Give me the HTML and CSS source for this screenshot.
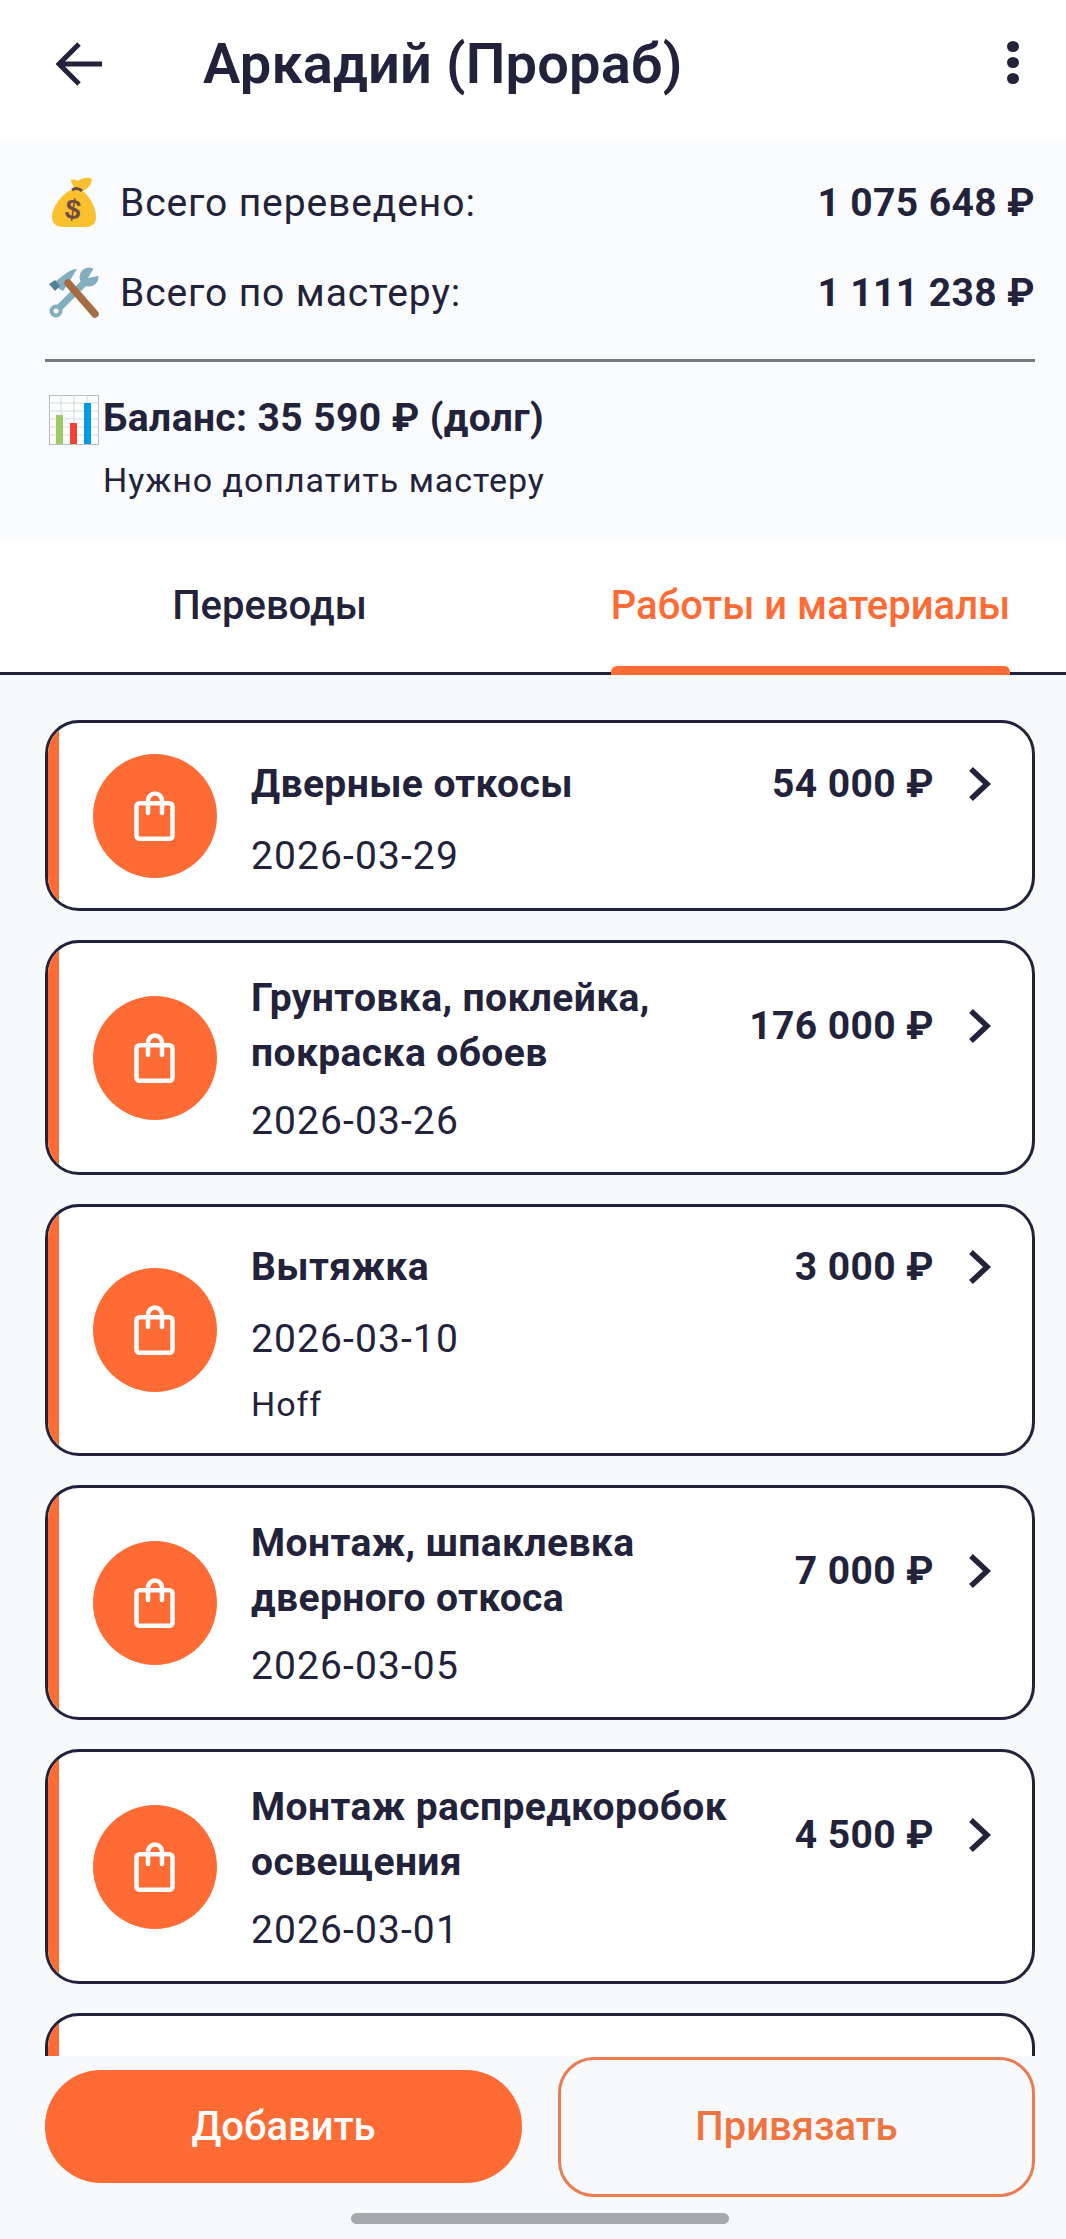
FILE: index.html
```html
<!DOCTYPE html>
<html lang="ru">
<head>
    <meta charset="UTF-8">
    <meta name="viewport" content="width=device-width, initial-scale=1.0">
    <title>Аркадий (Прораб)</title>
    <link rel="stylesheet" href="styles.css">
</head>
<body>
    <svg class="icon-defs" xmlns="http://www.w3.org/2000/svg">
        <symbol id="bag" viewBox="0 0 44 54">
            <rect x="3.500" y="14.200" width="36" height="35.600" rx="3" fill="none" stroke="#fff" stroke-width="4.500"/>
            <path d="M15 24V11.500a7 7 0 0 1 14 0V24" fill="none" stroke="#fff" stroke-width="4.500" stroke-linecap="round"/>
        </symbol>
        <symbol id="chevron" viewBox="0 0 24 36">
            <path d="M3 3l16 15L3 33" fill="none" stroke="#22223a" stroke-width="5.500"/>
        </symbol>
    </svg>

    <header class="topbar">
        <svg class="back-icon" viewBox="0 0 46 44">
            <path d="M46 22H4M23 2L3 22l20 20" fill="none" stroke="#22223a" stroke-width="5"/>
        </svg>
        <h1 class="topbar-title">Аркадий (Прораб)</h1>
        <div class="dots"><span></span><span></span><span></span></div>
    </header>

    <section class="summary">
        <div class="summary-row">
            <svg class="emoji" viewBox="0 0 50 52">
                <path d="M22 13C13 17 3 30 3 40c0 7 5 10 12 10h20c8 0 12-3 12-10 0-11-8-23-15-27z" fill="#fbc02d"/>
                <path d="M26 13c-1-4-4-7-4-10 3-1 5 0 7 1 2-2 8-4 13-3 2 3-1 9-5 11l-3 2z" fill="#fbc02d"/>
                <path d="M23 13c3-2 7-2 10 1" fill="none" stroke="#6d4c41" stroke-width="3"/>
                <text class="emoji-dollar" x="24" y="42" text-anchor="middle" transform="rotate(8 24 32)">$</text>
            </svg>
            <span class="summary-label">Всего переведено:</span>
            <span class="summary-value">1 075 648 ₽</span>
        </div>
        <div class="summary-row summary-row-second">
            <svg class="emoji" viewBox="0 0 50 52">
                <path d="M6 45L36 15" stroke="#82aec0" stroke-width="7"/>
                <circle cx="7" cy="44" r="6.500" fill="#82aec0"/>
                <circle cx="7" cy="44" r="2.500" fill="#fafbfd"/>
                <circle cx="40" cy="10" r="9.500" fill="#82aec0"/>
                <path d="M39 11l7-12 8 9z" fill="#fafbfd"/>
                <path d="M7 14l9-7c4-3 8-5 12-5-2 3-4 6-6 10l-8 12-5-3z" fill="#82aec0"/>
                <path d="M0 17l6-4 5 6-5 5z" fill="#4f8296"/>
                <path d="M19 16l27 31" stroke="#a56c43" stroke-width="7.500" stroke-linecap="round"/>
            </svg>
            <span class="summary-label">Всего по мастеру:</span>
            <span class="summary-value">1 111 238 ₽</span>
        </div>
        <hr class="summary-line">
        <div class="balance">
            <svg class="emoji emoji-chart" viewBox="0 0 50 50">
                <rect x="0.500" y="0.500" width="49" height="49" fill="#fff" stroke="#b0bec5"/>
                <path d="M0 8h50M0 16h50M0 24h50M0 32h50M0 40h50M12 0v50M25 0v50M38 0v50" stroke="#cfd8dc"/>
                <rect x="7" y="20" width="7" height="29" fill="#9ccc65"/>
                <rect x="21" y="28" width="7" height="21" fill="#f44336"/>
                <rect x="35" y="8" width="7" height="41" fill="#039be5"/>
            </svg>
            <div class="balance-text">
                <div class="balance-title">Баланс: 35 590 ₽ (долг)</div>
                <div class="balance-note">Нужно доплатить мастеру</div>
            </div>
        </div>
    </section>

    <nav class="tabs">
        <div class="tab">Переводы</div>
        <div class="tab tab-active"><span>Работы и материалы</span></div>
    </nav>

    <main class="list">
        <div class="card">
            <div class="card-stripe"></div>
            <div class="card-main">
                <div class="card-circle"><svg class="bag-icon"><use href="#bag"/></svg></div>
                <div class="card-body">
                    <div class="card-head">
                        <div class="card-title">Дверные откосы</div>
                        <div class="card-amount">54 000 ₽</div>
                        <svg class="chevron"><use href="#chevron"/></svg>
                    </div>
                    <div class="card-date">2026-03-29</div>
                </div>
            </div>
        </div>

        <div class="card">
            <div class="card-stripe"></div>
            <div class="card-main">
                <div class="card-circle"><svg class="bag-icon"><use href="#bag"/></svg></div>
                <div class="card-body">
                    <div class="card-head">
                        <div class="card-title">Грунтовка, поклейка, покраска обоев</div>
                        <div class="card-amount">176 000 ₽</div>
                        <svg class="chevron"><use href="#chevron"/></svg>
                    </div>
                    <div class="card-date">2026-03-26</div>
                </div>
            </div>
        </div>

        <div class="card">
            <div class="card-stripe"></div>
            <div class="card-main">
                <div class="card-circle"><svg class="bag-icon"><use href="#bag"/></svg></div>
                <div class="card-body">
                    <div class="card-head">
                        <div class="card-title">Вытяжка</div>
                        <div class="card-amount">3 000 ₽</div>
                        <svg class="chevron"><use href="#chevron"/></svg>
                    </div>
                    <div class="card-date">2026-03-10</div>
                    <div class="card-note">Hoff</div>
                </div>
            </div>
        </div>

        <div class="card">
            <div class="card-stripe"></div>
            <div class="card-main">
                <div class="card-circle"><svg class="bag-icon"><use href="#bag"/></svg></div>
                <div class="card-body">
                    <div class="card-head">
                        <div class="card-title">Монтаж, шпаклевка дверного откоса</div>
                        <div class="card-amount">7 000 ₽</div>
                        <svg class="chevron"><use href="#chevron"/></svg>
                    </div>
                    <div class="card-date">2026-03-05</div>
                </div>
            </div>
        </div>

        <div class="card">
            <div class="card-stripe"></div>
            <div class="card-main">
                <div class="card-circle"><svg class="bag-icon"><use href="#bag"/></svg></div>
                <div class="card-body">
                    <div class="card-head">
                        <div class="card-title">Монтаж распредкоробок освещения</div>
                        <div class="card-amount">4 500 ₽</div>
                        <svg class="chevron"><use href="#chevron"/></svg>
                    </div>
                    <div class="card-date">2026-03-01</div>
                </div>
            </div>
        </div>

        <div class="card">
            <div class="card-stripe"></div>
            <div class="card-main"></div>
        </div>
    </main>

    <footer class="actions">
        <button class="btn btn-primary">Добавить</button>
        <button class="btn btn-outline">Привязать</button>
    </footer>
    <div class="home-area"><div class="home-bar"></div></div>
</body>
</html>
```

FILE: styles.css
```css
* {
    box-sizing: border-box;
}

body {
    font-family: Roboto, "Liberation Sans", sans-serif;
    display: flex;
    flex-direction: column;
    height: 2239px;
    margin: 0;
    overflow: hidden;
    background-color: #f8f9fb;
    color: #22223a;
}

.icon-defs {
    display: none;
}

.topbar {
    display: flex;
    flex: none;
    align-items: center;
    height: 140px;
    padding: 0 31px 13px 56px;
    background: white;
}

.back-icon {
    width: 46px;
    height: 44px;
    margin-right: 101px;
}

.topbar-title {
    flex: 1;
    margin: 0;
    font-size: 56px;
    font-weight: 600;
    letter-spacing: 0.15px;
}

.dots {
    display: flex;
    flex-direction: column;
    gap: 5px;
    width: 12px;
    margin-right: 16px;
    margin-bottom: 2px;
}

.dots span {
    width: 12px;
    height: 11px;
    border-radius: 50%;
    background: #22223a;
}

.summary {
    flex: none;
    height: 400px;
    padding: 36px 31px 0 45px;
    background-color: #fafbfd;
}

.summary-row {
    display: flex;
    align-items: center;
    height: 54px;
}

.summary-row-second {
    margin-top: 36px;
}

.emoji {
    flex: none;
    width: 50px;
    height: 52px;
    margin-left: 4px;
}

.emoji-dollar {
    font-family: "Liberation Sans", sans-serif;
    font-size: 28px;
    font-weight: 700;
    fill: #6d4c41;
}

.summary-label {
    flex: 1;
    margin-left: 21px;
    font-size: 39px;
    letter-spacing: 0.9px;
}

.summary-value {
    font-size: 39px;
    font-weight: 700;
    letter-spacing: 0.4px;
}

.summary-line {
    height: 3px;
    margin: 39px 0 0;
    border: none;
    background: #77797f;
}

.balance {
    display: flex;
    margin-top: 33px;
}

.emoji-chart {
    width: 50px;
    height: 50px;
}

.balance-text {
    margin-left: 4px;
}

.balance-title {
    font-size: 39px;
    font-weight: 700;
    line-height: 46px;
    letter-spacing: 0.4px;
}

.balance-note {
    margin-top: 17px;
    font-size: 34px;
    line-height: 44px;
    letter-spacing: 0.95px;
}

.tabs {
    display: flex;
    flex: none;
    height: 135px;
    background: white;
    border-bottom: 3px solid #22223a;
}

.tab {
    display: flex;
    justify-content: center;
    width: 539px;
    padding-top: 42px;
    font-size: 40px;
    font-weight: 500;
}

.tab-active {
    width: 527px;
    padding-left: 16px;
    color: #ff6b35;
}

.tab-active span {
    display: flex;
    flex-direction: column;
    justify-content: space-between;
    margin-bottom: -3px;
}

.tab-active span::after {
    content: "";
    height: 9px;
    border-radius: 6px 6px 0 0;
    background: #ff6b35;
}

.list {
    display: flex;
    flex: 1;
    flex-direction: column;
    gap: 29px;
    min-height: 0;
    padding: 45px 31px 0 45px;
    overflow: hidden;
}

.card {
    display: flex;
    flex: none;
    min-height: 191px;
    background: white;
    border: 3px solid #22223a;
    border-radius: 34px;
    overflow: hidden;
}

.card-stripe {
    flex: none;
    width: 11px;
    background: #ff6b35;
}

.card-main {
    display: flex;
    flex: 1;
    align-items: center;
    padding: 28px 40px 28px 34px;
}

.card-circle {
    display: flex;
    flex: none;
    align-items: center;
    justify-content: center;
    width: 124px;
    height: 124px;
    margin-right: 34px;
    border-radius: 50%;
    background: #ff6b35;
}

.bag-icon {
    width: 44px;
    height: 54px;
}

.card-body {
    flex: 1;
}

.card-head {
    display: flex;
    align-items: center;
    min-height: 64px;
}

.card-title {
    flex: 1;
    font-size: 39px;
    font-weight: 700;
    line-height: 55px;
    letter-spacing: 0.4px;
}

.card-amount {
    margin-left: 24px;
    font-size: 39px;
    font-weight: 700;
    letter-spacing: 0.4px;
    white-space: nowrap;
}

.chevron {
    width: 24px;
    height: 36px;
    margin-left: 34px;
}

.card-date {
    margin-top: 17px;
    font-size: 39px;
    line-height: 46px;
    letter-spacing: 1.1px;
}

.card-note {
    margin-top: 21px;
    font-size: 34px;
    line-height: 42px;
    letter-spacing: 0.9px;
}

.actions {
    display: flex;
    flex: none;
    align-items: center;
    gap: 36px;
    height: 141px;
    padding: 0 31px 0 45px;
}

.btn {
    flex: none;
    width: 477px;
    padding: 0;
    font-family: Roboto, "Liberation Sans", sans-serif;
    font-size: 40px;
    font-weight: 500;
}

.btn-primary {
    height: 113px;
    border: none;
    border-radius: 56px;
    background-color: #ff6b35;
    color: white;
}

.btn-outline {
    height: 140px;
    border: 3px solid #ea7c52;
    border-radius: 36px;
    background: transparent;
    color: #f0743f;
}

.home-area {
    flex: none;
    height: 42px;
    padding-top: 16px;
}

.home-bar {
    width: 378px;
    height: 11px;
    margin-left: 351px;
    border-radius: 6px;
    background: #a7a9ab;
}
```
